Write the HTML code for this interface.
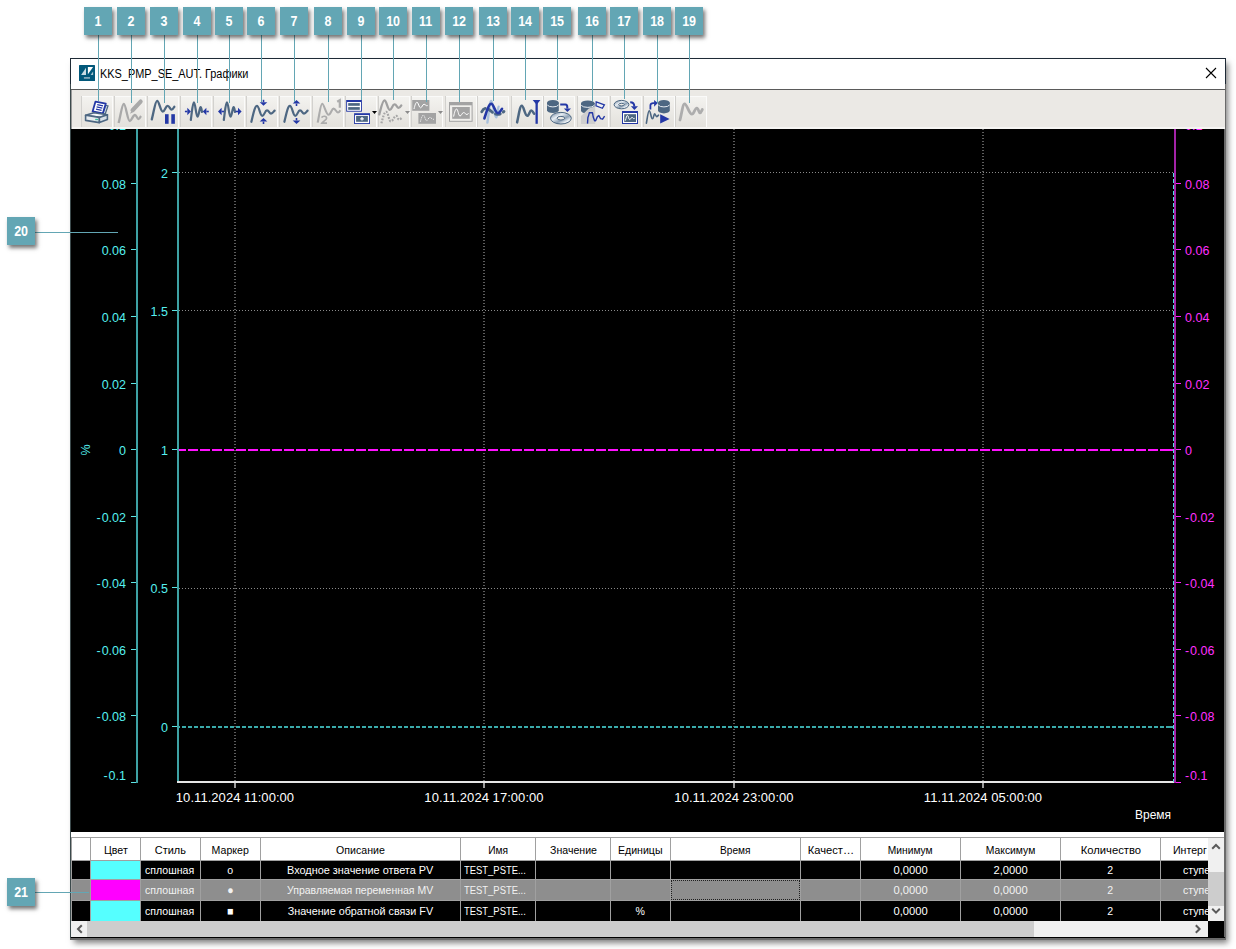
<!DOCTYPE html>
<html><head><meta charset="utf-8"><style>
html,body{margin:0;padding:0;}
body{width:1236px;height:949px;overflow:hidden;background:#fff;position:relative;font-family:"Liberation Sans",sans-serif;}
.a{position:absolute;}
.lb{position:absolute;width:28px;height:28px;background:#63a6b4;color:#fff;font-weight:bold;font-size:14.5px;line-height:29px;text-align:center;box-shadow:2px 3px 4px rgba(0,0,0,0.55);}
.lb span{display:inline-block;transform:scaleX(0.86);}
.th{font-size:11.5px;color:#000;white-space:nowrap;overflow:hidden;}
.td{font-size:11.5px;white-space:nowrap;overflow:hidden;}
.btn{position:absolute;top:96px;width:32px;height:31px;background:linear-gradient(#f4f3f0,#e3e1dc);box-shadow:inset 1px 0 0 #d2d1ce, inset -1px 0 0 #fbfbfa, inset 0 1px 0 #fafaf9;}
.sc{display:inline-block;transform:scaleX(0.92);transform-origin:50% 50%;}
.sl{display:inline-block;transform:scaleX(0.92);transform-origin:0 50%;}
.ln{position:absolute;background:#63a6b4;}
</style></head><body>
<div class="a" style="left:70px;top:58px;width:1156px;height:882px;box-shadow:3px 4px 6px -1px rgba(0,0,0,0.5);background:#6a6a6a;"></div>
<div class="a" style="left:70px;top:58px;width:1156px;height:1px;background:#1e2a36;"></div>
<div class="a" style="left:70px;top:58px;width:1px;height:26px;background:#1e2a36;"></div>
<div class="a" style="left:1225px;top:58px;width:1px;height:26px;background:#1e2a36;"></div>
<div class="a" style="left:70px;top:84px;width:1px;height:854px;background:#3c4a4c;"></div>
<div class="a" style="left:71px;top:59px;width:1154px;height:30px;background:#fff;"></div>
<div class="a" style="left:71px;top:89px;width:1154px;height:1px;background:#5a5a5a;"></div>
<svg class="a" style="left:79px;top:65px;" width="16" height="16" viewBox="0 0 16 16"><rect x="0" y="0" width="16" height="16" rx="0.5" fill="#02587a"/><path d="M2.1,9.9 L7,2.7 L7,9.9 Z" fill="#c9dbe3"/><path d="M8.9,2.1 L14.1,2.1 L8.9,9.3 Z" fill="#ffffff"/><path d="M11.6,9.9 L14.1,6.5 L14.1,9.9 Z" fill="#a9c4d0"/><rect x="4.9" y="12" width="6.1" height="1.8" fill="#7fa6b8"/></svg>
<div class="a" style="left:100px;top:59px;height:30px;line-height:30px;font-size:12px;color:#000;white-space:nowrap;transform-origin:0 50%;transform:scaleX(0.91);">KKS_PMP_SE_AUT. Графики</div>
<svg class="a" style="left:1205px;top:67px;" width="12" height="12" viewBox="0 0 12 12"><path d="M1,1 L11,11 M11,1 L1,11" stroke="#000" stroke-width="1.1"/></svg>
<div class="a" style="left:71px;top:90px;width:1154px;height:39px;background:#ebe9e5;"></div>
<div class="a" style="left:71px;top:90px;width:1px;height:39px;background:#9a9a9a;"></div>
<div class="a" style="left:72px;top:127px;width:1153px;height:2px;background:#f6f5f3;"></div>
<div class="a" style="left:71px;top:129px;width:1153px;height:703px;background:#000;"></div>
<div class="a" style="left:71px;top:832px;width:1153px;height:5px;background:#fff;"></div>
<div class="a" style="left:71px;top:837px;width:1153px;height:1px;background:#a0a0a0;"></div>
<div class="a" style="left:71px;top:937px;width:1154px;height:1px;background:#000;"></div>
<div class="btn" style="left:81px;"></div>
<div class="btn" style="left:114px;"></div>
<div class="btn" style="left:147px;"></div>
<div class="btn" style="left:180px;"></div>
<div class="btn" style="left:213px;"></div>
<div class="btn" style="left:246px;"></div>
<div class="btn" style="left:279px;"></div>
<div class="btn" style="left:312px;"></div>
<div class="btn" style="left:345px;"></div>
<div class="btn" style="left:378px;"></div>
<div class="btn" style="left:411px;"></div>
<div class="btn" style="left:445px;"></div>
<div class="btn" style="left:477px;"></div>
<div class="btn" style="left:511px;"></div>
<div class="btn" style="left:543px;"></div>
<div class="btn" style="left:577px;"></div>
<div class="btn" style="left:610px;"></div>
<div class="btn" style="left:643px;"></div>
<div class="btn" style="left:675px;"></div>
<svg class="a" style="left:81px;top:96px;overflow:visible;" width="32" height="32" viewBox="0 0 32 32"><path d="M24.5,9.2 L27,10 L24.2,18 L21.8,17.5 Z" fill="#c9d5e0" stroke="#4d6782" stroke-width="1.2"/><path d="M14.5,5.6 L24.8,7.6 L21.8,17.4 L11.6,15.4 Z" fill="#fff" stroke="#2438a6" stroke-width="1.8" stroke-linejoin="round"/><path d="M16.2,8.6 L22,9.8 M15.6,10.9 L21.3,12.1 M15,13.2 L20.6,14.4" stroke="#2438a6" stroke-width="1.3"/><path d="M4.6,19.3 L13,16.8 L26.4,18.8 L18.4,21.4 Z" fill="#f5f7f9" stroke="#4d6782" stroke-width="1.6" stroke-linejoin="round"/><path d="M4.6,19.3 L18.4,21.4 L18.4,26.6 L4.6,24.4 Z" fill="#e6ebef" stroke="#4d6782" stroke-width="1.6" stroke-linejoin="round"/><path d="M18.4,21.4 L26.4,18.8 L26.4,23.4 L18.4,26.6 Z" fill="#d8e0e7" stroke="#4d6782" stroke-width="1.6" stroke-linejoin="round"/><rect x="14.2" y="22.8" width="2.8" height="1.4" fill="#3cc0a0"/></svg>
<svg class="a" style="left:114px;top:96px;overflow:visible;" width="32" height="32" viewBox="0 0 32 32"><path d="M4.6,27 C6.5,20 8,8 9.8,7.8 C11.8,7.8 13.5,25 15.8,25 C17.5,25 19,19 20.9,19 C22.6,19 23,23 24.6,23 C25.8,23 26.5,20.5 27,19.9" fill="none" stroke="#a9a9a9" stroke-width="2.3" stroke-linejoin="round"/><path d="M26.6,5.6 L18.6,14.2" stroke="#a9a9a9" stroke-width="4.2" stroke-linecap="round"/><path d="M17.2,15.2 L16,17.8 L18.6,16.6 Z" fill="#a9a9a9"/></svg>
<svg class="a" style="left:147px;top:96px;overflow:visible;" width="32" height="32" viewBox="0 0 32 32"><path d="M4.8,23.4 C7,15 8.3,4.8 10.1,4.8 C12.2,4.8 13.4,15.6 15.8,15.6 C18,15.6 18.6,9.8 20.6,9.8 C22.6,9.8 23,13.6 24.6,13.6 C26,13.6 26.8,11.6 27.3,10.8" fill="none" stroke="#4d6782" stroke-width="2.3" stroke-linecap="round"/><rect x="18" y="18.2" width="3.6" height="9.6" fill="#2438a6"/><rect x="24.3" y="18.2" width="3.6" height="9.6" fill="#2438a6"/></svg>
<svg class="a" style="left:180px;top:96px;overflow:visible;" width="32" height="32" viewBox="0 0 32 32"><path d="M10.8,24 C12,16 12.6,6.4 13.9,6.4 C15.4,6.4 16,20.6 17.5,20.6 C19,20.6 19.4,11.1 20.6,11.1 C21.5,11.1 21.8,15 22,16" fill="none" stroke="#4d6782" stroke-width="2.2" stroke-linecap="round"/><path d="M10.9,15.5 L7.300000000000001,11.8 L7.300000000000001,19.2 Z" fill="#2438a6"/><line x1="7.300000000000001" y1="15.5" x2="4.9" y2="15.5" stroke="#2438a6" stroke-width="1.6"/><path d="M22.8,15.5 L26.400000000000002,11.8 L26.400000000000002,19.2 Z" fill="#2438a6"/><line x1="26.400000000000002" y1="15.5" x2="28.8" y2="15.5" stroke="#2438a6" stroke-width="1.6"/></svg>
<svg class="a" style="left:213px;top:96px;overflow:visible;" width="32" height="32" viewBox="0 0 32 32"><path d="M10.8,24 C12,16 12.6,6.4 13.9,6.4 C15.4,6.4 16,20.6 17.5,20.6 C19,20.6 19.4,11.1 20.6,11.1 C21.5,11.1 21.8,15 22,16" fill="none" stroke="#4d6782" stroke-width="2.2" stroke-linecap="round"/><path d="M5.0,15.5 L8.6,11.8 L8.6,19.2 Z" fill="#2438a6"/><line x1="8.6" y1="15.5" x2="11.0" y2="15.5" stroke="#2438a6" stroke-width="1.6"/><path d="M28.6,15.5 L25.0,11.8 L25.0,19.2 Z" fill="#2438a6"/><line x1="25.0" y1="15.5" x2="22.6" y2="15.5" stroke="#2438a6" stroke-width="1.6"/></svg>
<svg class="a" style="left:246px;top:96px;overflow:visible;" width="32" height="32" viewBox="0 0 32 32"><path d="M5.4,25.8 C7.3,18 8.8,9.9 10.9,9.9 C13.2,9.9 14,19.8 16.3,19.8 C18.5,19.8 18.8,14.4 21,14.4 C23,14.4 23.4,17.6 25,17.6 C26.6,17.6 27.8,15.4 28.6,14.6" fill="none" stroke="#4d6782" stroke-width="2.2" stroke-linecap="round"/><path d="M17.5,9.8 L13.7,6.200000000000001 L21.3,6.200000000000001 Z" fill="#2438a6"/><line x1="17.5" y1="6.200000000000001" x2="17.5" y2="3.8000000000000007" stroke="#2438a6" stroke-width="1.6"/><path d="M17.5,22.0 L13.7,25.6 L21.3,25.6 Z" fill="#2438a6"/><line x1="17.5" y1="25.6" x2="17.5" y2="28.0" stroke="#2438a6" stroke-width="1.6"/></svg>
<svg class="a" style="left:279px;top:96px;overflow:visible;" width="32" height="32" viewBox="0 0 32 32"><path d="M5.4,25.8 C7.3,18 8.8,9.9 10.9,9.9 C13.2,9.9 14,19.8 16.3,19.8 C18.5,19.8 18.8,14.4 21,14.4 C23,14.4 23.4,17.6 25,17.6 C26.6,17.6 27.8,15.4 28.6,14.6" fill="none" stroke="#4d6782" stroke-width="2.2" stroke-linecap="round"/><path d="M17.5,4.0 L13.7,7.6 L21.3,7.6 Z" fill="#2438a6"/><line x1="17.5" y1="7.6" x2="17.5" y2="10.0" stroke="#2438a6" stroke-width="1.6"/><path d="M17.5,28.0 L13.7,24.4 L21.3,24.4 Z" fill="#2438a6"/><line x1="17.5" y1="24.4" x2="17.5" y2="22.0" stroke="#2438a6" stroke-width="1.6"/></svg>
<svg class="a" style="left:312px;top:96px;overflow:visible;" width="32" height="32" viewBox="0 0 32 32"><path d="M5.7,26.6 C7.5,18 8.6,7.8 10.2,7.8 C12,7.8 14.2,18.8 16.5,18.8 C18.6,18.8 19.8,12.6 21.6,12.6 C23.6,12.6 24.4,16.5 26,16.5 C27.2,16.5 27.8,15 28.3,14.2" fill="none" stroke="#acacac" stroke-width="2.1" stroke-linejoin="round"/><path d="M25.2,5.8 L27.8,4.2 L27.8,11.8" fill="none" stroke="#acacac" stroke-width="2.2"/><path d="M9.6,21.6 C10.4,19.8 14.6,19.6 14.6,22.2 C14.6,24 10.8,25.2 9.8,27.2 L15,27.2" fill="none" stroke="#acacac" stroke-width="1.7"/></svg>
<svg class="a" style="left:345px;top:96px;overflow:visible;" width="32" height="32" viewBox="0 0 32 32"><rect x="1.2" y="4" width="15.7" height="11.7" fill="#2438a6"/><rect x="2.1" y="6" width="13.9" height="8.8" fill="#fff"/><rect x="3.2" y="7.1" width="11.6" height="2.7" fill="#4d6782"/><rect x="3.2" y="11.1" width="11.6" height="2.7" fill="#4d6782"/><rect x="9.1" y="17.2" width="15.9" height="10.8" fill="#2438a6"/><rect x="10" y="19.1" width="14.1" height="8" fill="#fff"/><rect x="11.1" y="20" width="11.8" height="5.8" fill="#4d6782"/><path d="M17,21 L17,24.6 M15.2,22.8 L18.8,22.8" stroke="#fff" stroke-width="1.2"/><path d="M27,15 L32,15 L29.5,17.9 Z" fill="#000"/></svg>
<svg class="a" style="left:378px;top:96px;overflow:visible;" width="32" height="32" viewBox="0 0 32 32"><path d="M1.3,18.4 C3,12 4.6,4.4 6.4,4.4 C8.6,4.4 9.6,13.8 11.8,13.8 C13.8,13.8 14.4,8.4 16.5,8.4 C18.6,8.4 19,11.8 20.6,11.8 C22,11.8 22.8,10.2 23.3,9.4" fill="none" stroke="#a0a0a0" stroke-width="2.3" stroke-linecap="round"/><path d="M3.4,27.3 C5,21 6.4,15.8 8.1,15.8 C10.2,15.8 10.8,25.3 12.8,25.3 C15,25.3 16.2,19.9 18.2,19.9 C19.6,19.9 19.9,23.6 20.9,23.6 C22.2,23.6 23.4,22.2 24.3,21.6" fill="none" stroke="#a6a6a6" stroke-width="2.2" stroke-dasharray="1.8 1.3"/><path d="M27,15 L32,15 L29.5,17.9 Z" fill="#8a8a8a"/></svg>
<svg class="a" style="left:411px;top:96px;overflow:visible;" width="32" height="32" viewBox="0 0 32 32"><rect x="1.2" y="4" width="17.2" height="10.8" fill="#a3a3a3"/><path d="M3,13 C4,9 4.8,6.2 6,6.2 C7.4,6.2 8,11.8 9.5,11.8 C11,11.8 11.6,8.2 13,8.2 C14.4,8.2 15.2,10.4 16.7,9.6" fill="none" stroke="#fff" stroke-width="1"/><rect x="7.4" y="17" width="17.6" height="10.8" fill="#a3a3a3"/><path d="M9.4,25.6 C10.6,21 11.2,19.2 12.4,19.2 C13.6,19.2 14.4,24.6 15.6,24.6 C16.8,24.6 17.6,21.4 18.8,21.4 C20,21.4 20.8,23.3 22.8,23.3" fill="none" stroke="#fff" stroke-width="1" stroke-dasharray="1 1"/><path d="M27,15 L32,15 L29.5,17.9 Z" fill="#8a8a8a"/></svg>
<svg class="a" style="left:445px;top:96px;overflow:visible;" width="32" height="32" viewBox="0 0 32 32"><rect x="4" y="6" width="23.6" height="19.8" fill="#a3a3a3"/><rect x="5" y="9.3" width="21.6" height="15.5" fill="#f0efec"/><rect x="7.2" y="11" width="17.6" height="11.8" fill="#a3a3a3"/><path d="M8.6,20.6 C9.6,16 10.4,13 11.6,13 C13,13 13.4,20 15,20 C16.6,20 17,16.6 18.6,16.6 C20.2,16.6 20.6,18.6 22,18.6 C22.8,18.6 23.2,17.6 23.4,17" fill="none" stroke="#fff" stroke-width="1"/></svg>
<svg class="a" style="left:477px;top:96px;overflow:visible;" width="32" height="32" viewBox="0 0 32 32"><path d="M10.4,26.6 C11.8,18 12.6,5 14.2,5 C16,5 17.2,21.4 19.2,21.4 C20.6,21.4 20.8,10.8 21.6,10.8" fill="none" stroke="#a9c1dc" stroke-width="2.4" stroke-linecap="round"/><path d="M4.7,15.8 C6,13.2 7.4,12.4 8.8,12.4 C12.4,12.4 15,17.2 19,18.2 C22.2,19 24.8,17.4 27,15.4" fill="none" stroke="#4d6782" stroke-width="2.8" stroke-linecap="round" stroke-dasharray="5 3.4"/><path d="M7.4,22.4 C9.4,16 11.8,7.8 14.2,7.8 C16.8,7.8 18,17.2 20.9,17.2 C23,17.2 23.8,14.2 25,12.8" fill="none" stroke="#2438a6" stroke-width="2.6" stroke-linecap="round"/></svg>
<svg class="a" style="left:511px;top:96px;overflow:visible;" width="32" height="32" viewBox="0 0 32 32"><path d="M6.1,26.4 C8,18 8.9,9.8 10.8,9.8 C12.8,9.8 13.8,19.8 16.2,19.8 C18.2,19.8 18.6,14.5 20.2,14.5 C21.8,14.5 22.2,17 23.2,17.8" fill="none" stroke="#4d6782" stroke-width="2.5" stroke-linecap="round"/><rect x="24.5" y="5" width="2.3" height="22.8" fill="#2438a6"/><path d="M21.7,4 L29.4,4 L25.6,8.8 Z" fill="#2438a6"/></svg>
<svg class="a" style="left:543px;top:96px;overflow:visible;" width="32" height="32" viewBox="0 0 32 32"><path d="M4.0,6.8 L4.0,14.3 A5.9,2.8 0 0 0 15.8,14.3 L15.8,6.8 Z" fill="#4d6782"/><ellipse cx="9.9" cy="6.8" rx="5.9" ry="2.8" fill="#4d6782"/><path d="M4.3,9.0 A5.9,2.8 0 0 0 15.5,9.0" fill="none" stroke="#e8edf2" stroke-width="1"/><path d="M17.2,8.6 L22.4,8.6 C23.6,8.6 24.3,9.6 24.3,11.2 L24.3,12.6" fill="none" stroke="#2438a6" stroke-width="2"/><path d="M20.9,12.4 L28,12.4 L24.4,15.9 Z" fill="#2438a6"/><defs><linearGradient id="dg15" x1="0" y1="0" x2="1" y2="1"><stop offset="0" stop-color="#5d7590"/><stop offset="0.35" stop-color="#e8eef4"/><stop offset="0.6" stop-color="#8ea2b6"/><stop offset="0.8" stop-color="#f4f7fa"/><stop offset="1" stop-color="#5d7590"/></linearGradient></defs><ellipse cx="17.9" cy="22.2" rx="10.4" ry="5.8" fill="url(#dg15)" stroke="#4d6782" stroke-width="1"/><ellipse cx="17.9" cy="22.2" rx="3.8" ry="1.8" fill="#ebe9e5" stroke="#4d6782" stroke-width="1"/></svg>
<svg class="a" style="left:577px;top:96px;overflow:visible;" width="32" height="32" viewBox="0 0 32 32"><path d="M4.000000000000001,7.2 L4.000000000000001,14.8 A6.8,2.8 0 0 0 17.6,14.8 L17.6,7.2 Z" fill="#4d6782"/><ellipse cx="10.8" cy="7.2" rx="6.8" ry="2.8" fill="#4d6782"/><path d="M4.300000000000001,9.4 A6.8,2.8 0 0 0 17.3,9.4" fill="none" stroke="#e8edf2" stroke-width="1"/><path d="M4,20 L11.8,12.6 L18.2,10.2 L18.2,28 L4,28 Z" fill="#cfcfcf"/><path d="M19.2,5.8 L27.4,8.8 L25.4,12.3 L19,9.8 Z" fill="#eef0f2" stroke="#2438a6" stroke-width="1.3"/><path d="M10.5,27.6 L10.9,21.4 L11.6,19.6 L12.3,16.8 L15.5,16.8 L16.2,21 L17.6,24.8 L18.6,24.8 L20.4,20.6 L21.9,19.6 L23.6,22.6 L25.6,23.2 L27.6,20.2" fill="none" stroke="#2438a6" stroke-width="1.4" stroke-linejoin="round"/></svg>
<svg class="a" style="left:610px;top:96px;overflow:visible;" width="32" height="32" viewBox="0 0 32 32"><defs><linearGradient id="dg17" x1="0" y1="0" x2="1" y2="1"><stop offset="0" stop-color="#5d7590"/><stop offset="0.35" stop-color="#e8eef4"/><stop offset="0.6" stop-color="#8ea2b6"/><stop offset="0.8" stop-color="#f4f7fa"/><stop offset="1" stop-color="#5d7590"/></linearGradient></defs><ellipse cx="11.5" cy="8.6" rx="7.4" ry="4.2" fill="url(#dg17)" stroke="#4d6782" stroke-width="1"/><ellipse cx="11.5" cy="8.6" rx="2.8" ry="1.3" fill="#ebe9e5" stroke="#4d6782" stroke-width="1"/><path d="M20.2,6.2 C22.6,6.2 24.3,7.4 24.3,10.4" fill="none" stroke="#2438a6" stroke-width="2"/><path d="M20.9,10.2 L28,10.2 L24.4,13.9 Z" fill="#2438a6"/><rect x="12" y="15" width="16" height="13" fill="#2438a6"/><rect x="13" y="17" width="14" height="10" fill="#fff"/><rect x="14.2" y="18.2" width="11.8" height="7.8" fill="#4d6782"/><path d="M15.4,24.6 C16.2,21.6 16.6,19.4 17.4,19.4 C18.4,19.4 18.8,23.6 19.6,23.6 C20.6,23.6 21,21.4 22,21.4 C23,21.4 23.4,23.4 24.6,22.4" fill="none" stroke="#fff" stroke-width="1"/></svg>
<svg class="a" style="left:643px;top:96px;overflow:visible;" width="32" height="32" viewBox="0 0 32 32"><path d="M14.999999999999998,6.8 L14.999999999999998,14.6 A5.9,2.8 0 0 0 26.799999999999997,14.6 L26.799999999999997,6.8 Z" fill="#4d6782"/><ellipse cx="20.9" cy="6.8" rx="5.9" ry="2.8" fill="#4d6782"/><path d="M15.299999999999999,9.0 A5.9,2.8 0 0 0 26.499999999999996,9.0" fill="none" stroke="#e8edf2" stroke-width="1"/><path d="M7.4,13.5 L7.4,9.6 C7.4,8 8.6,7.1 10.2,7.1 L11.6,7.1" fill="none" stroke="#2438a6" stroke-width="1.8"/><path d="M14.8,7.1 L11.1,4 L11.1,10.8 Z" fill="#2438a6"/><path d="M3.4,27.2 C4.6,20 5.2,14.8 6.2,14.8 C7.6,14.8 8,22.8 9.4,22.8 C10.6,22.8 10.8,17.9 11.6,17.9 C12.4,17.9 12.8,20.6 13.6,20.6 C14.4,20.6 14.8,19.6 15.5,19.2" fill="none" stroke="#4d6782" stroke-width="1.6" stroke-linecap="round"/><path d="M17.2,18.2 L26.6,22.9 L17.2,27.6 Z" fill="#2438a6"/></svg>
<svg class="a" style="left:675px;top:96px;overflow:visible;" width="32" height="32" viewBox="0 0 32 32"><path d="M5,24 C6.8,17 7.8,7.8 9.6,7.8 C12,7.8 14,18.2 16.9,18.2 C19,18.2 19.8,12.1 21.9,12.1 C23.4,12.1 23.8,16.9 25,16.9 C26,16.9 26.8,14.4 27.3,13.5" fill="none" stroke="#adadad" stroke-width="2.8" stroke-linecap="round" stroke-linejoin="round"/></svg>
<div class="a" style="left:71px;top:129px;width:1153px;height:703px;overflow:hidden;background:#000;">
<div class="a" style="left:108px;top:43px;width:994px;height:1px;background:repeating-linear-gradient(to right,#8a8a8a 0 1px,transparent 1px 3px);background-position:0px 0;"></div>
<div class="a" style="left:108px;top:181px;width:994px;height:1px;background:repeating-linear-gradient(to right,#8a8a8a 0 1px,transparent 1px 3px);background-position:0px 0;"></div>
<div class="a" style="left:108px;top:459px;width:994px;height:1px;background:repeating-linear-gradient(to right,#8a8a8a 0 1px,transparent 1px 3px);background-position:0px 0;"></div>
<div class="a" style="left:163px;top:0px;width:2px;height:652px;background:repeating-linear-gradient(to bottom,#5c5c5c 0 1px,transparent 1px 3px);background-position:0 0px;"></div>
<div class="a" style="left:412px;top:0px;width:2px;height:652px;background:repeating-linear-gradient(to bottom,#5c5c5c 0 1px,transparent 1px 3px);background-position:0 0px;"></div>
<div class="a" style="left:662px;top:0px;width:2px;height:652px;background:repeating-linear-gradient(to bottom,#5c5c5c 0 1px,transparent 1px 3px);background-position:0 0px;"></div>
<div class="a" style="left:911px;top:0px;width:2px;height:652px;background:repeating-linear-gradient(to bottom,#5c5c5c 0 1px,transparent 1px 3px);background-position:0 0px;"></div>
<div class="a" style="left:65px;top:0px;width:2px;height:654px;background:#3ea2a4;"></div>
<div class="a" style="left:60px;top:-13px;width:5px;height:1px;background:#5ee4e4;"></div>
<div class="a" style="left:60px;top:54px;width:5px;height:1px;background:#5ee4e4;"></div>
<div class="a" style="left:60px;top:120px;width:5px;height:1px;background:#5ee4e4;"></div>
<div class="a" style="left:60px;top:187px;width:5px;height:1px;background:#5ee4e4;"></div>
<div class="a" style="left:60px;top:254px;width:5px;height:1px;background:#5ee4e4;"></div>
<div class="a" style="left:60px;top:320px;width:5px;height:1px;background:#5ee4e4;"></div>
<div class="a" style="left:60px;top:387px;width:5px;height:1px;background:#5ee4e4;"></div>
<div class="a" style="left:60px;top:453px;width:5px;height:1px;background:#5ee4e4;"></div>
<div class="a" style="left:60px;top:520px;width:5px;height:1px;background:#5ee4e4;"></div>
<div class="a" style="left:60px;top:586px;width:5px;height:1px;background:#5ee4e4;"></div>
<div class="a" style="left:60px;top:653px;width:5px;height:1px;background:#5ee4e4;"></div>
<div class="a" style="left:106px;top:0px;width:2px;height:654px;background:#3ea2a4;"></div>
<div class="a" style="left:101px;top:43px;width:5px;height:1px;background:#5ee4e4;"></div>
<div class="a" style="left:101px;top:181px;width:5px;height:1px;background:#5ee4e4;"></div>
<div class="a" style="left:101px;top:320px;width:5px;height:1px;background:#5ee4e4;"></div>
<div class="a" style="left:101px;top:458px;width:5px;height:1px;background:#5ee4e4;"></div>
<div class="a" style="left:101px;top:597px;width:5px;height:1px;background:#5ee4e4;"></div>
<div class="a" style="left:106px;top:652px;width:997px;height:2px;background:#e6e6e6;"></div>
<div class="a" style="left:163px;top:654px;width:2px;height:5px;background:#9a9a9a;"></div>
<div class="a" style="left:412px;top:654px;width:2px;height:5px;background:#9a9a9a;"></div>
<div class="a" style="left:662px;top:654px;width:2px;height:5px;background:#9a9a9a;"></div>
<div class="a" style="left:911px;top:654px;width:2px;height:5px;background:#9a9a9a;"></div>
<div class="a" style="left:108px;top:597px;width:994px;height:2px;background:repeating-linear-gradient(to right,#3aaaaa 0 4px,transparent 4px 6px);background-position:-3px 0;"></div>
<div class="a" style="left:108px;top:320px;width:994px;height:2px;background:repeating-linear-gradient(to right,#ff10ff 0 10px,transparent 10px 12px);background-position:-3px 0;"></div>
<div class="a" style="left:1102px;top:44px;width:1px;height:609px;background:repeating-linear-gradient(to bottom,#50e0e0 0 4px,transparent 4px 6px);"></div>
<div class="a" style="left:1103px;top:0px;width:2px;height:654px;background:#a423a8;"></div>
<div class="a" style="left:1105px;top:-13px;width:5px;height:1px;background:#ff20ff;"></div>
<div class="a" style="left:1105px;top:54px;width:5px;height:1px;background:#ff20ff;"></div>
<div class="a" style="left:1105px;top:120px;width:5px;height:1px;background:#ff20ff;"></div>
<div class="a" style="left:1105px;top:187px;width:5px;height:1px;background:#ff20ff;"></div>
<div class="a" style="left:1105px;top:254px;width:5px;height:1px;background:#ff20ff;"></div>
<div class="a" style="left:1105px;top:320px;width:5px;height:1px;background:#ff20ff;"></div>
<div class="a" style="left:1105px;top:387px;width:5px;height:1px;background:#ff20ff;"></div>
<div class="a" style="left:1105px;top:453px;width:5px;height:1px;background:#ff20ff;"></div>
<div class="a" style="left:1105px;top:520px;width:5px;height:1px;background:#ff20ff;"></div>
<div class="a" style="left:1105px;top:586px;width:5px;height:1px;background:#ff20ff;"></div>
<div class="a" style="left:1105px;top:653px;width:5px;height:1px;background:#ff20ff;"></div>
</div>
<svg class="a" style="left:0;top:0;" width="1236" height="949" viewBox="0 0 1236 949">
<defs><clipPath id="cc"><rect x="71" y="129" width="1153" height="703"/></clipPath></defs>
<g clip-path="url(#cc)" font-family="Liberation Sans, sans-serif" font-size="12.5">
<text x="126" y="130" text-anchor="end" fill="#55f0f0">0.1</text>
<text x="1185" y="130" fill="#ff30ff">0.1</text>
<text x="126" y="188.5" text-anchor="end" fill="#55f0f0">0.08</text>
<text x="1185" y="188.5" fill="#ff30ff">0.08</text>
<text x="126" y="254.5" text-anchor="end" fill="#55f0f0">0.06</text>
<text x="1185" y="254.5" fill="#ff30ff">0.06</text>
<text x="126" y="321.5" text-anchor="end" fill="#55f0f0">0.04</text>
<text x="1185" y="321.5" fill="#ff30ff">0.04</text>
<text x="126" y="388.5" text-anchor="end" fill="#55f0f0">0.02</text>
<text x="1185" y="388.5" fill="#ff30ff">0.02</text>
<text x="126" y="454.5" text-anchor="end" fill="#55f0f0">0</text>
<text x="1185" y="454.5" fill="#ff30ff">0</text>
<text x="126" y="521.5" text-anchor="end" fill="#55f0f0">-<tspan dx="0.9">0.02</tspan></text>
<text x="1185" y="521.5" fill="#ff30ff">-<tspan dx="0.9">0.02</tspan></text>
<text x="126" y="587.5" text-anchor="end" fill="#55f0f0">-<tspan dx="0.9">0.04</tspan></text>
<text x="1185" y="587.5" fill="#ff30ff">-<tspan dx="0.9">0.04</tspan></text>
<text x="126" y="654.5" text-anchor="end" fill="#55f0f0">-<tspan dx="0.9">0.06</tspan></text>
<text x="1185" y="654.5" fill="#ff30ff">-<tspan dx="0.9">0.06</tspan></text>
<text x="126" y="720.5" text-anchor="end" fill="#55f0f0">-<tspan dx="0.9">0.08</tspan></text>
<text x="1185" y="720.5" fill="#ff30ff">-<tspan dx="0.9">0.08</tspan></text>
<text x="126" y="779.5" text-anchor="end" fill="#55f0f0">-<tspan dx="0.9">0.1</tspan></text>
<text x="1185" y="779.5" fill="#ff30ff">-<tspan dx="0.9">0.1</tspan></text>
<text x="168" y="177.5" text-anchor="end" fill="#55f0f0">2</text>
<text x="168" y="315.5" text-anchor="end" fill="#55f0f0">1.5</text>
<text x="168" y="454.5" text-anchor="end" fill="#55f0f0">1</text>
<text x="168" y="592.5" text-anchor="end" fill="#55f0f0">0.5</text>
<text x="168" y="731.5" text-anchor="end" fill="#55f0f0">0</text>
<text x="0" y="0" transform="translate(89.5 450) rotate(-90)" text-anchor="middle" fill="#55f0f0">%</text>
<text x="235" y="802" text-anchor="middle" fill="#ffffff" font-size="13" letter-spacing="0.05">10.11.2024 11:00:00</text>
<text x="484" y="802" text-anchor="middle" fill="#ffffff" font-size="13" letter-spacing="0.05">10.11.2024 17:00:00</text>
<text x="734" y="802" text-anchor="middle" fill="#ffffff" font-size="13" letter-spacing="0.05">10.11.2024 23:00:00</text>
<text x="983" y="802" text-anchor="middle" fill="#ffffff" font-size="13" letter-spacing="0.05">11.11.2024 05:00:00</text>
<text x="1171" y="819" text-anchor="end" fill="#ffffff" font-size="13" textLength="36" lengthAdjust="spacingAndGlyphs">Время</text>
</g></svg>
<div class="a" style="left:71px;top:838px;width:1153px;height:99px;background:#fff;"></div>
<div class="a" style="left:72px;top:861px;width:1136px;height:18px;background:#000;"></div>
<div class="a" style="left:72px;top:880px;width:1136px;height:20px;background:#8e8e8e;"></div>
<div class="a" style="left:72px;top:901px;width:1136px;height:20px;background:#000;"></div>
<div class="a" style="left:91px;top:861px;width:49px;height:18px;background:#55ffff;"></div>
<div class="a" style="left:91px;top:880px;width:49px;height:20px;background:#ff00ff;"></div>
<div class="a" style="left:91px;top:901px;width:49px;height:20px;background:#55ffff;"></div>
<div class="a" style="left:71px;top:837px;width:1137px;height:1px;background:#a0a0a0;"></div>
<div class="a" style="left:71px;top:860px;width:1137px;height:1px;background:#a0a0a0;"></div>
<div class="a" style="left:71px;top:879px;width:1137px;height:1px;background:#a0a0a0;"></div>
<div class="a" style="left:71px;top:900px;width:1137px;height:1px;background:#a0a0a0;"></div>
<div class="a" style="left:71px;top:838px;width:1px;height:83px;background:#a0a0a0;"></div>
<div class="a" style="left:90px;top:838px;width:1px;height:83px;background:#a0a0a0;"></div>
<div class="a" style="left:140px;top:838px;width:1px;height:83px;background:#a0a0a0;"></div>
<div class="a" style="left:200px;top:838px;width:1px;height:83px;background:#a0a0a0;"></div>
<div class="a" style="left:260px;top:838px;width:1px;height:83px;background:#a0a0a0;"></div>
<div class="a" style="left:460px;top:838px;width:1px;height:83px;background:#a0a0a0;"></div>
<div class="a" style="left:535px;top:838px;width:1px;height:83px;background:#a0a0a0;"></div>
<div class="a" style="left:610px;top:838px;width:1px;height:83px;background:#a0a0a0;"></div>
<div class="a" style="left:670px;top:838px;width:1px;height:83px;background:#a0a0a0;"></div>
<div class="a" style="left:800px;top:838px;width:1px;height:83px;background:#a0a0a0;"></div>
<div class="a" style="left:860px;top:838px;width:1px;height:83px;background:#a0a0a0;"></div>
<div class="a" style="left:960px;top:838px;width:1px;height:83px;background:#a0a0a0;"></div>
<div class="a" style="left:1060px;top:838px;width:1px;height:83px;background:#a0a0a0;"></div>
<div class="a" style="left:1160px;top:838px;width:1px;height:83px;background:#a0a0a0;"></div>
<div class="a" style="left:0;top:0;width:1208px;height:949px;overflow:hidden;">
<div class="a th" style="left:91px;top:839px;width:49px;height:22px;line-height:22px;text-align:center;"><span class="sc">Цвет</span></div>
<div class="a th" style="left:141px;top:839px;width:59px;height:22px;line-height:22px;text-align:center;"><span class="sc" style="transform:scaleX(0.95)">Стиль</span></div>
<div class="a th" style="left:201px;top:839px;width:59px;height:22px;line-height:22px;text-align:center;"><span class="sc">Маркер</span></div>
<div class="a th" style="left:261px;top:839px;width:199px;height:22px;line-height:22px;text-align:center;"><span class="sc">Описание</span></div>
<div class="a th" style="left:461px;top:839px;width:74px;height:22px;line-height:22px;text-align:center;"><span class="sc" style="transform:scaleX(0.885)">Имя</span></div>
<div class="a th" style="left:536px;top:839px;width:74px;height:22px;line-height:22px;text-align:center;"><span class="sc">Значение</span></div>
<div class="a th" style="left:611px;top:839px;width:59px;height:22px;line-height:22px;text-align:center;"><span class="sc">Единицы</span></div>
<div class="a th" style="left:671px;top:839px;width:129px;height:22px;line-height:22px;text-align:center;"><span class="sc" style="transform:scaleX(0.88)">Время</span></div>
<div class="a th" style="left:801px;top:839px;width:59px;height:22px;line-height:22px;text-align:center;"><span class="sc" style="transform:scaleX(0.97)">Качест…</span></div>
<div class="a th" style="left:861px;top:839px;width:99px;height:22px;line-height:22px;text-align:center;"><span class="sc" style="transform:scaleX(0.89)">Минимум</span></div>
<div class="a th" style="left:961px;top:839px;width:99px;height:22px;line-height:22px;text-align:center;"><span class="sc" style="transform:scaleX(0.9)">Максимум</span></div>
<div class="a th" style="left:1061px;top:839px;width:99px;height:22px;line-height:22px;text-align:center;"><span class="sc" style="transform:scaleX(0.977)">Количество</span></div>
<div class="a th" style="left:1173px;top:839px;height:22px;line-height:22px;"><span class="sl">Интерг</span></div>
<div class="a td" style="left:141px;top:861px;width:59px;height:18px;line-height:18px;text-align:left;color:#fff;padding-left:4px;box-sizing:border-box;"><span class="sl">сплошная</span></div>
<div class="a td" style="left:201px;top:861px;width:59px;height:18px;line-height:18px;text-align:center;color:#fff;box-sizing:border-box;"><span class="sc">o</span></div>
<div class="a td" style="left:261px;top:861px;width:199px;height:18px;line-height:18px;text-align:center;color:#fff;box-sizing:border-box;"><span class="sc" style="transform:scaleX(0.948)">Входное значение ответа PV</span></div>
<div class="a td" style="left:461px;top:861px;width:74px;height:18px;line-height:18px;text-align:left;color:#fff;padding-left:3px;box-sizing:border-box;"><span class="sl" style="transform:scaleX(0.82)">TEST_PSTE...</span></div>
<div class="a td" style="left:861px;top:861px;width:99px;height:18px;line-height:18px;text-align:center;color:#fff;box-sizing:border-box;"><span class="sc" style="transform:scaleX(0.974)">0,0000</span></div>
<div class="a td" style="left:961px;top:861px;width:99px;height:18px;line-height:18px;text-align:center;color:#fff;box-sizing:border-box;"><span class="sc" style="transform:scaleX(0.974)">2,0000</span></div>
<div class="a td" style="left:1061px;top:861px;width:99px;height:18px;line-height:18px;text-align:center;color:#fff;box-sizing:border-box;"><span class="sc">2</span></div>
<div class="a td" style="left:1183px;top:861px;height:18px;line-height:18px;color:#fff;"><span class="sl">ступе</span></div>
<div class="a td" style="left:141px;top:880px;width:59px;height:20px;line-height:20px;text-align:left;color:#f2f2f2;padding-left:4px;box-sizing:border-box;"><span class="sl">сплошная</span></div>
<div class="a td" style="left:201px;top:880px;width:59px;height:20px;line-height:20px;text-align:center;color:#f2f2f2;box-sizing:border-box;"><span class="sc">●</span></div>
<div class="a td" style="left:261px;top:880px;width:199px;height:20px;line-height:20px;text-align:center;color:#f2f2f2;box-sizing:border-box;"><span class="sc" style="transform:scaleX(0.912)">Управляемая переменная MV</span></div>
<div class="a td" style="left:461px;top:880px;width:74px;height:20px;line-height:20px;text-align:left;color:#f2f2f2;padding-left:3px;box-sizing:border-box;"><span class="sl" style="transform:scaleX(0.82)">TEST_PSTE...</span></div>
<div class="a td" style="left:861px;top:880px;width:99px;height:20px;line-height:20px;text-align:center;color:#f2f2f2;box-sizing:border-box;"><span class="sc" style="transform:scaleX(0.974)">0,0000</span></div>
<div class="a td" style="left:961px;top:880px;width:99px;height:20px;line-height:20px;text-align:center;color:#f2f2f2;box-sizing:border-box;"><span class="sc" style="transform:scaleX(0.974)">0,0000</span></div>
<div class="a td" style="left:1061px;top:880px;width:99px;height:20px;line-height:20px;text-align:center;color:#f2f2f2;box-sizing:border-box;"><span class="sc">2</span></div>
<div class="a td" style="left:1183px;top:880px;height:20px;line-height:20px;color:#f2f2f2;"><span class="sl">ступе</span></div>
<div class="a td" style="left:141px;top:901px;width:59px;height:20px;line-height:20px;text-align:left;color:#fff;padding-left:4px;box-sizing:border-box;"><span class="sl">сплошная</span></div>
<div class="a td" style="left:201px;top:901px;width:59px;height:20px;line-height:20px;text-align:center;color:#fff;box-sizing:border-box;"><span class="sc">■</span></div>
<div class="a td" style="left:261px;top:901px;width:199px;height:20px;line-height:20px;text-align:center;color:#fff;box-sizing:border-box;"><span class="sc" style="transform:scaleX(0.938)">Значение обратной связи FV</span></div>
<div class="a td" style="left:461px;top:901px;width:74px;height:20px;line-height:20px;text-align:left;color:#fff;padding-left:3px;box-sizing:border-box;"><span class="sl" style="transform:scaleX(0.82)">TEST_PSTE...</span></div>
<div class="a td" style="left:611px;top:901px;width:59px;height:20px;line-height:20px;text-align:center;color:#fff;box-sizing:border-box;"><span class="sc">%</span></div>
<div class="a td" style="left:861px;top:901px;width:99px;height:20px;line-height:20px;text-align:center;color:#fff;box-sizing:border-box;"><span class="sc" style="transform:scaleX(0.974)">0,0000</span></div>
<div class="a td" style="left:961px;top:901px;width:99px;height:20px;line-height:20px;text-align:center;color:#fff;box-sizing:border-box;"><span class="sc" style="transform:scaleX(0.974)">0,0000</span></div>
<div class="a td" style="left:1061px;top:901px;width:99px;height:20px;line-height:20px;text-align:center;color:#fff;box-sizing:border-box;"><span class="sc">2</span></div>
<div class="a td" style="left:1183px;top:901px;height:20px;line-height:20px;color:#fff;"><span class="sl">ступе</span></div>
</div>
<div class="a" style="left:671px;top:880px;width:129px;height:20px;box-sizing:border-box;border:1px dotted #202020;"></div>
<div class="a" style="left:1208px;top:838px;width:16px;height:83px;background:#f0f0f0;"></div>
<div class="a" style="left:1208px;top:872px;width:16px;height:34px;background:#cdcdcd;"></div>
<svg class="a" style="left:1208px;top:838px;" width="16" height="83"><path d="M4.2 10.8 L8 7 L11.8 10.8" fill="none" stroke="#5a5a5a" stroke-width="2"/><path d="M4.2 70.8 L8 74.6 L11.8 70.8" fill="none" stroke="#5a5a5a" stroke-width="2"/></svg>
<div class="a" style="left:71px;top:921px;width:1137px;height:16px;background:#f0f0f0;"></div>
<div class="a" style="left:87px;top:921px;width:947px;height:16px;background:#cdcdcd;"></div>
<svg class="a" style="left:71px;top:921px;" width="1137" height="16"><path d="M10.8 4.2 L7 8 L10.8 11.8" fill="none" stroke="#5a5a5a" stroke-width="2"/><path d="M1124.8 4.2 L1128.6 8 L1124.8 11.8" fill="none" stroke="#5a5a5a" stroke-width="2"/></svg>
<div class="a" style="left:1208px;top:921px;width:16px;height:16px;background:#000;"></div>
<div class="ln" style="left:98px;top:35px;width:1px;height:66px;"></div>
<div class="ln" style="left:131px;top:35px;width:1px;height:68px;"></div>
<div class="ln" style="left:164px;top:35px;width:1px;height:68px;"></div>
<div class="ln" style="left:197px;top:35px;width:1px;height:68px;"></div>
<div class="ln" style="left:229px;top:35px;width:1px;height:68px;"></div>
<div class="ln" style="left:261px;top:35px;width:1px;height:67px;"></div>
<div class="ln" style="left:294px;top:35px;width:1px;height:67px;"></div>
<div class="ln" style="left:328px;top:35px;width:1px;height:67px;"></div>
<div class="ln" style="left:361px;top:35px;width:1px;height:65px;"></div>
<div class="ln" style="left:393px;top:35px;width:1px;height:65px;"></div>
<div class="ln" style="left:426px;top:35px;width:1px;height:67px;"></div>
<div class="ln" style="left:459px;top:35px;width:1px;height:67px;"></div>
<div class="ln" style="left:493px;top:35px;width:1px;height:66px;"></div>
<div class="ln" style="left:525px;top:35px;width:1px;height:65px;"></div>
<div class="ln" style="left:557px;top:35px;width:1px;height:65px;"></div>
<div class="ln" style="left:592px;top:35px;width:1px;height:66px;"></div>
<div class="ln" style="left:624px;top:35px;width:1px;height:64px;"></div>
<div class="ln" style="left:657px;top:35px;width:1px;height:68px;"></div>
<div class="ln" style="left:689px;top:35px;width:1px;height:68px;"></div>
<div class="lb" style="left:84px;top:7px;"><span>1</span></div>
<div class="lb" style="left:117px;top:7px;"><span>2</span></div>
<div class="lb" style="left:150px;top:7px;"><span>3</span></div>
<div class="lb" style="left:183px;top:7px;"><span>4</span></div>
<div class="lb" style="left:215px;top:7px;"><span>5</span></div>
<div class="lb" style="left:247px;top:7px;"><span>6</span></div>
<div class="lb" style="left:280px;top:7px;"><span>7</span></div>
<div class="lb" style="left:314px;top:7px;"><span>8</span></div>
<div class="lb" style="left:347px;top:7px;"><span>9</span></div>
<div class="lb" style="left:379px;top:7px;"><span>10</span></div>
<div class="lb" style="left:412px;top:7px;"><span>11</span></div>
<div class="lb" style="left:445px;top:7px;"><span>12</span></div>
<div class="lb" style="left:479px;top:7px;"><span>13</span></div>
<div class="lb" style="left:511px;top:7px;"><span>14</span></div>
<div class="lb" style="left:543px;top:7px;"><span>15</span></div>
<div class="lb" style="left:578px;top:7px;"><span>16</span></div>
<div class="lb" style="left:610px;top:7px;"><span>17</span></div>
<div class="lb" style="left:643px;top:7px;"><span>18</span></div>
<div class="lb" style="left:675px;top:7px;"><span>19</span></div>
<div class="ln" style="left:35px;top:232px;width:83px;height:1px;"></div>
<div class="lb" style="left:7px;top:217px;"><span>20</span></div>
<div class="ln" style="left:35px;top:892px;width:54px;height:1px;"></div>
<div class="lb" style="left:7px;top:878px;"><span>21</span></div>
</body></html>
